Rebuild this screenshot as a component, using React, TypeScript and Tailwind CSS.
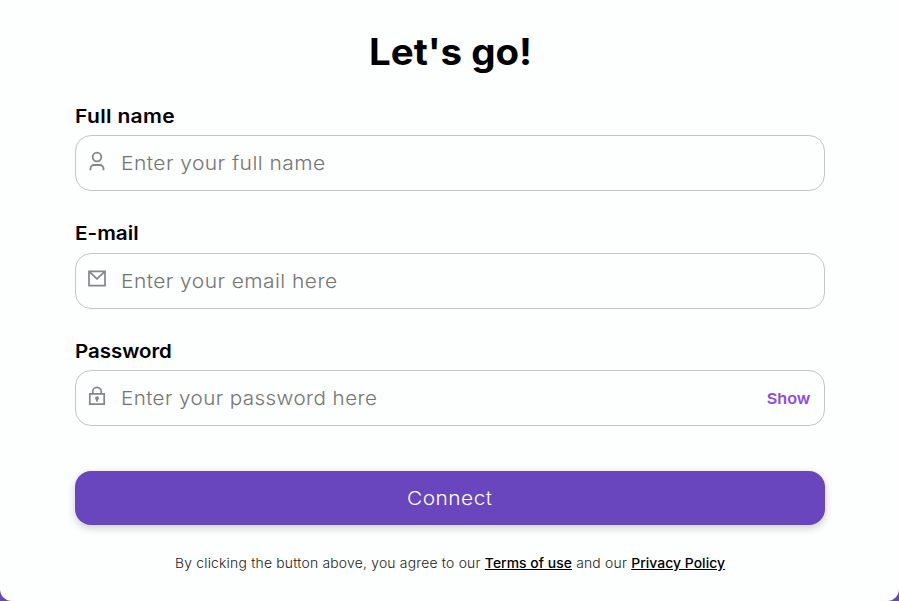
import type { ReactNode } from "react";

function UserIcon() {
  return (
    <svg width="18" height="22" viewBox="0 0 18 22" fill="none" stroke="#85858a" strokeWidth="1.8">
      <circle cx="9" cy="7" r="4.3" />
      <path d="M2.5 20.3v-1.8a3.5 3.5 0 0 1 3.5-3.5h6a3.5 3.5 0 0 1 3.5 3.5v1.8" />
    </svg>
  );
}

function MailIcon() {
  return (
    <svg width="18" height="22" viewBox="0 0 18 22" fill="none" stroke="#85858a" strokeWidth="1.7">
      <path d="M1 3.4h16v14.2H1zM1.5 3.8L9 10.8l7.5-7" />
    </svg>
  );
}

function LockIcon() {
  return (
    <svg width="18" height="22" viewBox="0 0 18 22" fill="none" stroke="#85858a" strokeWidth="1.7">
      <path d="M1.8 8.9h14.4v10.3H1.8zM4.7 8.9V6.7a4.3 4.3 0 0 1 8.6 0v2.2M9 13.4v3.4" />
      <circle cx="9" cy="13.2" r="1.1" fill="#85858a" />
    </svg>
  );
}

type FieldProps = {
  label: string;
  labelClass: string;
  placeholder: string;
  inputClass: string;
  icon: ReactNode;
  action?: ReactNode;
};

function Field({ label, labelClass, placeholder, inputClass, icon, action }: FieldProps) {
  return (
    <label className="block h-[117.5px]">
      <span className={`block h-[29px] origin-left text-[19px] font-semibold text-black ${labelClass}`}>{label}</span>
      <span className="flex h-14 items-center rounded-2xl border border-[#c5c5c8] pl-3 pr-[14px]">
        <span className="mb-1 shrink-0">{icon}</span>
        <input
          placeholder={placeholder}
          className={`ml-[15px] h-full w-[520px] origin-left bg-transparent text-[19px] font-light tracking-[0.4px] outline-none placeholder:text-[#757575] ${inputClass}`}
        />
        {action}
      </span>
    </label>
  );
}

export default function App() {
  return (
    <div className="h-[601px] w-[899px] overflow-hidden bg-[#6946bd] font-['Inter','Liberation_Sans',sans-serif]">
      <main className="h-full rounded-b-[12px] bg-[#fdfefe] pl-[75px] pr-[74px] pt-[30px]">
        <h1 className="h-[76px] scale-x-[1.04] pl-px text-center text-[37px] leading-[44px] font-bold text-black">Let&apos;s go!</h1>
        <Field label="Full name" labelClass="leading-[22px] tracking-[0.3px] scale-x-[1.105]" placeholder="Enter your full name" inputClass="scale-x-[1.105]" icon={<UserIcon />} />
        <Field label="E-mail" labelClass="leading-[20px] scale-x-[1.09]" placeholder="Enter your email here" inputClass="pt-[2px] scale-x-[1.103]" icon={<MailIcon />} />
        <Field
          label="Password"
          labelClass="leading-[22px] scale-x-[1.075]"
          placeholder="Enter your password here"
          inputClass="scale-x-[1.083]"
          icon={<LockIcon />}
          action={
            <button type="button" className="ml-auto origin-right scale-x-[1.08] pt-0.5 text-[15px] font-semibold text-[#8b4be8]">
              Show
            </button>
          }
        />
        <button type="button" className="mt-[12.5px] block h-[54px] w-full rounded-2xl bg-[#6946bd] text-[19px] text-white shadow-[0_3px_8px_rgba(0,0,0,0.2)]">
          <span className="inline-block scale-x-[1.1] pt-0.5 font-light tracking-[0.4px]">Connect</span>
        </button>
        <p className="mt-7 scale-x-[1.068] text-center text-[13px] leading-5 font-light tracking-[0.2px] whitespace-nowrap text-[#222]">
          By clicking the button above, you agree to our{" "}
          <a className="font-medium tracking-[0.05px] text-black underline">Terms of use</a> and our{" "}
          <a className="font-medium tracking-[0.05px] text-black underline">Privacy Policy</a>
        </p>
      </main>
    </div>
  );
}
